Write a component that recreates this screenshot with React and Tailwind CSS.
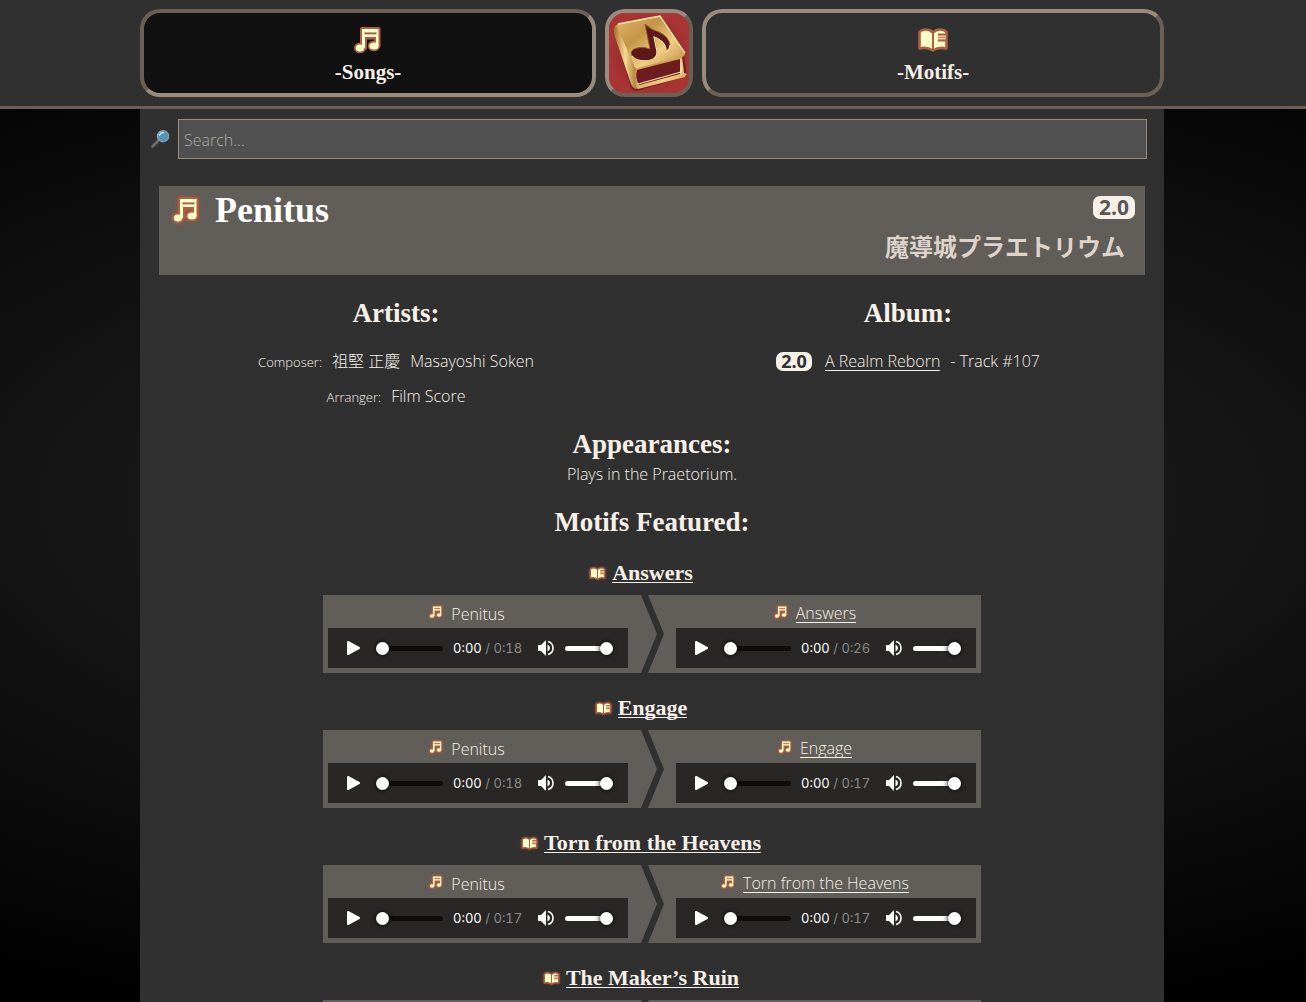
import { useState } from 'react';

const motifs = [
  { name: 'Answers', songTime: '0:18', motifTime: '0:26' },
  { name: 'Engage', songTime: '0:18', motifTime: '0:17' },
  { name: 'Torn from the Heavens', songTime: '0:17', motifTime: '0:17' },
  { name: 'The Maker’s Ruin', songTime: '0:18', motifTime: '0:21' },
];

const serif = "font-['Liberation_Serif','Noto_Sans_CJK_JP',serif] font-bold";

export default function App() {
  const [query, setQuery] = useState('');

  return (
    <div className="flex h-screen flex-col bg-[radial-gradient(100%_55%,#262626,#000)] font-['Open_Sans','Noto_Sans_CJK_JP',sans-serif] font-light text-[#f7f0e8]">
      <header className="shrink-0 border-b-3 border-[#6b6055] bg-[#303030] py-[9px] pr-0.5">
        <nav className="mx-auto flex h-[88px] max-w-[1024px] gap-[9px]">
          <a
            href="#songs"
            className="flex flex-auto flex-col items-center rounded-[20px] border-4 border-[#6b6055] border-r-[#9a8c7c] border-b-[#9a8c7c] bg-[#111] pt-[13px]"
          >
            <NoteIcon className="size-7" />
            <span className={`${serif} mt-1.5 text-[21px] leading-6`}>-Songs-</span>
          </a>
          <a
            href="#home"
            aria-label="Home"
            className="size-[88px] shrink-0 overflow-hidden rounded-[20px] border-4 border-[#9a8c7c] border-r-[#6b6055] border-b-[#6b6055] bg-[#a33]"
          >
            <BookLogo />
          </a>
          <a
            href="#motifs"
            className="flex flex-auto flex-col items-center rounded-[20px] border-4 border-[#9a8c7c] border-r-[#6b6055] border-b-[#6b6055] pt-[13px]"
          >
            <BookIcon className="h-7 w-8" />
            <span className={`${serif} mt-1.5 text-[21px] leading-6`}>-Motifs-</span>
          </a>
        </nav>
      </header>

      <div className="min-h-0 flex-1 overflow-y-auto pr-0.5 [scrollbar-width:none]">
        <main className="mx-auto min-h-full max-w-[1024px] bg-[#303030] pt-[10px]">
          {/* search */}
          <div className="flex items-center pr-[17px] pl-[10px]">
            <label htmlFor="search" aria-label="Search" className="w-7 shrink-0">
              <SearchIcon />
            </label>
            <input
              id="search"
              type="text"
              placeholder="Search..."
              value={query}
              onChange={(e) => setQuery(e.target.value)}
              className="h-10 min-w-0 flex-1 border border-[#9a8c7c] bg-[#505050] px-[5px] pt-0.5 text-base outline-none placeholder:text-[#a9a9a9]"
            />
          </div>

          {/* song title */}
          <section className="mx-[19px] mt-[27px] h-[89px] bg-[#615d58] pr-[10px] pl-[13px]">
            <div className="flex items-start justify-between">
              <div className="flex items-center gap-[15px] pt-1">
                <NoteIcon className="size-7 drop-shadow-[0_0_2px_#b0563a]" />
                <h1 className={`${serif} text-[36px] leading-10 text-white`}>Penitus</h1>
              </div>
              <Patch className="mt-[10px] h-[23px] w-[42px] text-[21px] text-[#5a5651]" />
            </div>
            <p className={`${serif} pr-[10px] text-right text-2xl leading-9 text-[#ddd3cb]`} lang="ja">
              魔導城プラエトリウム
            </p>
          </section>

          {/* credits */}
          <div className="mt-[22px] grid grid-cols-2 text-center">
            <section>
              <SectionTitle>Artists:</SectionTitle>
              <div className="mt-[15px] flex items-baseline justify-center gap-[10px] leading-[34px]">
                <span className="text-[13px]">Composer:</span>
                <span lang="ja">祖堅 正慶</span>
                <span>Masayoshi Soken</span>
              </div>
              <div className="flex items-baseline justify-center gap-[10px] leading-[34px]">
                <span className="text-[13px]">Arranger:</span>
                <span>Film Score</span>
              </div>
            </section>
            <section>
              <SectionTitle>Album:</SectionTitle>
              <div className="mt-[15px] flex h-[34px] items-center justify-center">
                <Patch className="mr-[13px] h-[19px] w-9 text-[18px] text-[#303030]" />
                <a href="#a-realm-reborn" className="border-b border-[#f7f0e8] leading-[18px]">
                  A Realm Reborn
                </a>
                <span className="ml-[10px]">- Track #107</span>
              </div>
            </section>
          </div>

          <section className="mt-[14px] text-center">
            <SectionTitle>Appearances:</SectionTitle>
            <p className="leading-7">Plays in the Praetorium.</p>
          </section>

          <section className="mt-[18px]">
            <SectionTitle>Motifs Featured:</SectionTitle>
            <div className="mt-[22px]">
              {motifs.map((motif) => (
                <MotifRow key={motif.name} motif={motif} />
              ))}
            </div>
          </section>
        </main>
      </div>
    </div>
  );
}

function SectionTitle({ children }) {
  return <h2 className={`${serif} text-center text-[27px] leading-8`}>{children}</h2>;
}

// white patch number badge
function Patch({ className }) {
  return (
    <span
      className={`inline-flex shrink-0 items-center justify-center rounded-[7px] bg-[#f7f0e8] leading-none font-bold ${className}`}
    >
      2.0
    </span>
  );
}

function MotifRow({ motif }) {
  return (
    <article className="mb-[22px]">
      <h3 className="flex h-[35px] items-center justify-center gap-1.5 pr-[22px] pb-2">
        <BookIcon className="h-[15px] w-[17px] drop-shadow-[0_0_1px_#b0563a]" />
        <a href="#motif" className={`${serif} border-b border-[#f7f0e8] text-[22px] leading-[18px]`}>
          {motif.name}
        </a>
      </h3>
      <div className="relative mx-auto flex w-[658px] justify-between bg-[#615d58] px-[5px] pb-[5px]">
        <Clip title="Penitus" time={motif.songTime} />
        {/* arrow between the two clips */}
        <svg
          viewBox="0 0 23 78"
          preserveAspectRatio="none"
          className="absolute top-0 left-[318px] h-full w-[23px]"
          aria-hidden="true"
        >
          <path d="M0 0H7L23 39L7 78H0L16 39Z" fill="#303030" />
        </svg>
        <Clip title={motif.name} time={motif.motifTime} link />
      </div>
    </article>
  );
}

function Clip({ title, time, link }) {
  return (
    <div className="w-[300px]">
      <div className="flex h-[33px] items-center justify-center gap-2 pt-1 pr-[22px]">
        <NoteIcon className="mb-1 size-3.5 drop-shadow-[0_0_1px_#b0563a]" />
        {link ? (
          <a href="#song" className="border-b border-[#f7f0e8] leading-[18px]">
            {title}
          </a>
        ) : (
          <span className="leading-[18px]">{title}</span>
        )}
      </div>
      <Player time={time} />
    </div>
  );
}

const slider =
  'h-4 shrink-0 appearance-none bg-transparent [&::-webkit-slider-runnable-track]:h-[5px] [&::-webkit-slider-runnable-track]:rounded-full [&::-webkit-slider-thumb]:-mt-1 [&::-webkit-slider-thumb]:size-[13px] [&::-webkit-slider-thumb]:appearance-none [&::-webkit-slider-thumb]:rounded-full [&::-webkit-slider-thumb]:bg-white [&::-webkit-slider-thumb]:shadow-[0_0_4px_#000]';

function Player({ time }) {
  return (
    <div className="flex h-10 items-center bg-[#282726] pl-[18px] font-['Inter',sans-serif] text-[13px] font-normal">
      <button type="button" aria-label="Play" className="mr-[15px]">
        <svg width="15" height="16" viewBox="0 0 15 16">
          <path d="M2 2L13 8L2 14Z" fill="#fff" stroke="#fff" strokeWidth="2" strokeLinejoin="round" />
        </svg>
      </button>
      <input
        type="range"
        aria-label="Seek"
        defaultValue="0"
        className={`${slider} w-[67px] [&::-webkit-slider-runnable-track]:bg-[#0d0d0d]`}
      />
      <span className="ml-[10px] w-[85px] whitespace-pre pt-px text-white tabular-nums">
        0:00<span className="text-[#8b8a88]"> / {time}</span>
      </span>
      <button type="button" aria-label="Mute" className="mr-[11px]">
        <svg width="16" height="16" viewBox="0 0 16 16">
          <path d="M0 5.5Q0 5 .5 5H3L7.5 .5Q8 0 8 1V15Q8 16 7.5 15.5L3 11H.5Q0 11 0 10.5Z" fill="#fff" />
          <path d="M9.5 4.5Q12 5.5 12 8T9.5 11.5Z" fill="#fff" />
          <path d="M10 1.5Q15 3 15 8T10 14.5" fill="none" stroke="#fff" strokeWidth="1.6" />
        </svg>
      </button>
      <input
        type="range"
        aria-label="Volume"
        defaultValue="100"
        className={`${slider} w-12 [&::-webkit-slider-runnable-track]:bg-[linear-gradient(90deg,#fff_60%,#999)]`}
      />
    </div>
  );
}

function NoteIcon({ className }) {
  return (
    <svg viewBox="0 0 28 28" className={`shrink-0 ${className}`} aria-hidden="true">
      <g stroke="#ad6045" strokeWidth="4" strokeLinejoin="round" fill="#ad6045">
        <path d="M8 3H24.5V20H22V11.5H11V22H8Z" />
        <ellipse cx="6" cy="22" rx="4" ry="3.3" />
        <ellipse cx="20" cy="20" rx="4.2" ry="3.3" />
      </g>
      <g fill="#ffffc8">
        <path d="M8 3H24.5V20H22V11H11V22H8Z" />
        <ellipse cx="6" cy="22" rx="4.2" ry="3.5" />
        <ellipse cx="20" cy="20" rx="4.6" ry="3.5" />
      </g>
      <path d="M10.5 7.4H22.5" stroke="#ad6045" strokeWidth="2" />
    </svg>
  );
}

function BookIcon({ className }) {
  return (
    <svg viewBox="0 0 32 26" className={`shrink-0 ${className}`} aria-hidden="true">
      <path
        d="M2.500 5Q4 3 8 2.500Q13 2.300 16 5.500Q19 2.300 24 2.500Q28 3 29.500 5V21.500Q22 19.500 16 23.500Q10 19.500 2.500 21.500Z"
        fill="#ffffc8"
        stroke="#ad6045"
        strokeWidth="2.600"
        strokeLinejoin="round"
      />
      <path d="M16 5V23" stroke="#ad6045" strokeWidth="2" />
      <path d="M21 7.500H28.500V13.500H21Z" fill="#f0c896" />
      <path d="M21 7.500H29M21 13.500H29" stroke="#ad6045" strokeWidth="1.800" />
      <path d="M21 10.500H29" stroke="#d08c64" strokeWidth="1" />
    </svg>
  );
}

function SearchIcon() {
  return (
    <svg width="20" height="20" viewBox="0 0 20 20" aria-hidden="true">
      <path d="M2.500 17.500L8.500 11.500" stroke="#6d6d6d" strokeWidth="2.600" strokeLinecap="round" />
      <circle cx="13" cy="7.200" r="5.600" fill="#5694b3" stroke="#8aa0a8" strokeWidth="1.300" />
      <path d="M9.500 6Q10.500 3.500 13.500 3.500" fill="none" stroke="#c4e3ef" strokeWidth="1.600" strokeLinecap="round" />
    </svg>
  );
}

function BookLogo() {
  return (
    <svg viewBox="0 0 80 80" className="size-full" aria-hidden="true">
      <defs>
        <linearGradient id="cover" x1="0" y1="0" x2="1" y2="1">
          <stop offset="0" stopColor="#e2b765" />
          <stop offset=".35" stopColor="#c59446" />
          <stop offset=".65" stopColor="#f0ce82" />
          <stop offset="1" stopColor="#b9853a" />
        </linearGradient>
        <linearGradient id="spine" x1="0" y1="0" x2="1" y2="0">
          <stop offset="0" stopColor="#a06e2a" />
          <stop offset=".5" stopColor="#f5da92" />
          <stop offset="1" stopColor="#a87430" />
        </linearGradient>
        <radialGradient id="red">
          <stop offset="0" stopColor="#7c2020" />
          <stop offset="1" stopColor="#a83434" />
        </radialGradient>
      </defs>
      <rect width="80" height="80" fill="url(#red)" />
      <path d="M5 16L22 75Q25 79 31 77L78 63L75 43L50 4Z" fill="#3c1010" opacity=".5" />
      <path d="M25 55L73 43L75 60L78 61L76 64L29 76Q22 72 25 55Z" fill="url(#cover)" />
      <path d="M28 57L71 46V61L30 72Q26 65 28 57Z" fill="#6e1c1f" />
      <path d="M29 71L72 59M72 46V60" fill="none" stroke="#f9e7b0" strokeWidth="1.200" />
      <path d="M5 15Q6 11 11 11L27 54Q24 63 28 76Q24 76 22 71L6 24Q4 19 5 15Z" fill="url(#spine)" />
      <path d="M10 11L51 3L76 40Q76 43 73 44L29 55Q26 56 25 52L8 14Q7 12 10 11Z" fill="url(#cover)" />
      <path d="M9 11L51 3L76 40" fill="none" stroke="#ffeeb8" strokeWidth="1.300" />
      <path
        d="M36 11Q42 17 50 19Q60 24 61 32Q61 36 57 39Q58 29 45 24Q47 32 48 39Q48 46 40 47.500Q28 49 23 43Q20 37 28 35Q34 33 41 36Z"
        fill="#5c181a"
        stroke="#8c5d25"
        strokeWidth=".8"
      />
      <path d="M23 43Q28 49 40 47.500Q48 46 48 39L45 24Q58 29 57 39Q61 36 61 32" fill="none" stroke="#ffe9a8" strokeWidth="1.100" />
    </svg>
  );
}
